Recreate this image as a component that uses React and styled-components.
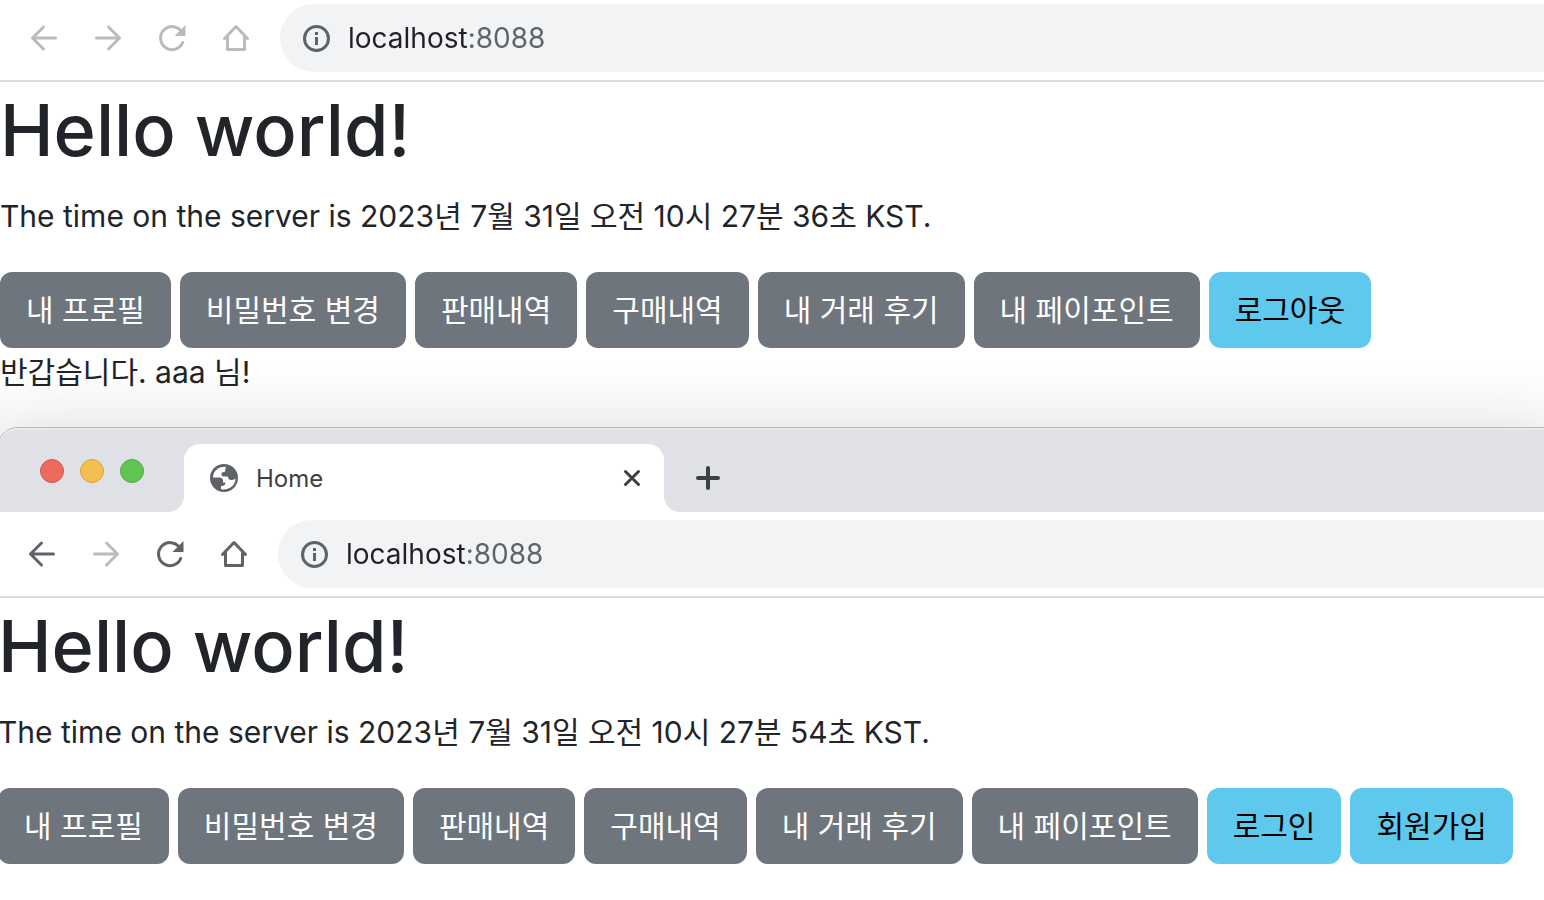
import React from 'react';
import styled, { createGlobalStyle, css } from 'styled-components';

const GlobalStyle = createGlobalStyle`
  * {
    box-sizing: border-box;
  }
  body {
    margin: 0;
    background: #fff;
    color: #212529;
    font-family: Inter, "Noto Sans CJK KR", sans-serif;
  }
  button {
    font-family: inherit;
    border: 0;
    cursor: pointer;
  }
`;

const menus = ['내 프로필', '비밀번호 변경', '판매내역', '구매내역', '내 거래 후기', '내 페이포인트'];

const BackIcon = () => (
  <Icon viewBox="0 0 32 32">
    <path d="M27.5 16H4.5M15.5 5l-11 11 11 11" />
  </Icon>
);

const ForwardIcon = () => (
  <Icon viewBox="0 0 32 32">
    <path d="M4.500 16h23M16.500 5l11 11-11 11" />
  </Icon>
);

const ReloadIcon = () => (
  <Icon viewBox="0 0 32 32">
    <path d="M26.700 20.500A11.500 11.500 0 1 1 25.500 9.500" />
    <path d="M29.500 3v11h-11z" fill="currentColor" stroke="none" />
  </Icon>
);

const HomeIcon = () => (
  <Icon viewBox="0 0 32 32">
    <path d="M4.500 16.500 16 4.500l11.500 12M7.500 15v12.500h17V15" />
  </Icon>
);

const InfoIcon = () => (
  <Icon viewBox="0 0 32 32">
    <circle cx="16.500" cy="16.500" r="12" />
    <path d="M16.500 15v8M16.500 10v3" strokeLinecap="butt" />
  </Icon>
);

const GlobeIcon = () => (
  <Icon viewBox="0 0 32 32">
    <circle cx="16" cy="16" r="14" fill="currentColor" stroke="none" />
    <path
      d="M18 4.700C10.500 4 5 9 5 15.500h6.500c2.500 0 3.500 1.500 3.500 3.500v1.500h2.500c0 2.500-1.500 3.500-4.500 3.500v3.200c8 1.500 14.500-3.700 14.500-10.700-1.500 1.200-3 1.500-4.500 1.500-2 0-3-1.500-3-3.500h-4.500c-1.200 0-2-1-2-2.300s1-2.200 2.500-2.200c2 0 1-3.300 2-5.300z"
      fill="#fff"
      stroke="none"
    />
  </Icon>
);

const CloseIcon = () => (
  <Icon viewBox="0 0 32 32">
    <path d="m9.500 9.500 13 13M22.500 9.500l-13 13" />
  </Icon>
);

const PlusIcon = () => (
  <Icon viewBox="0 0 32 32">
    <path d="M16 6v20M6 16h20" strokeWidth="4" />
  </Icon>
);

const Navigation = ({ name, inactive, first }) => (
  <Toolbar $first={first}>
    <NavButton aria-label="Back" $dim={inactive}><BackIcon /></NavButton>
    <NavButton aria-label="Forward" $dim><ForwardIcon /></NavButton>
    <NavButton aria-label="Reload" $dim={inactive}><ReloadIcon /></NavButton>
    <NavButton aria-label="Home" $dim={inactive}><HomeIcon /></NavButton>
    <AddressBar htmlFor={name} aria-label="Address">
      <InfoIcon />
      <AddressInput id={name} type="text" defaultValue="localhost:8088" />
    </AddressBar>
  </Toolbar>
);

const Home = ({ serverTime, actions, user }) => (
  <Page>
    <Title>Hello world!</Title>
    <Text>The time on the server is {serverTime}.</Text>
    <ButtonRow>
      {menus.map((label) => (
        <MenuButton key={label}>{label}</MenuButton>
      ))}
      {actions.map((label) => (
        <MenuButton key={label} $info>{label}</MenuButton>
      ))}
    </ButtonRow>
    {user && <Greeting>반갑습니다. {user} 님!</Greeting>}
  </Page>
);

const App = () => {
  return (
    <>
      <GlobalStyle />
      <BackWindow>
        <Navigation name="back-address" inactive first />
        <Home serverTime="2023년 7월 31일 오전 10시 27분 36초 KST" actions={['로그아웃']} user="aaa" />
      </BackWindow>
      <FrontWindow>
        <TabStrip>
          <Lights>
            <Light $color="#ed6a5e" $edge="#d4544a" />
            <Light $color="#f5bf4f" $edge="#d6a243" />
            <Light $color="#61c554" $edge="#51a73e" />
          </Lights>
          <Tab>
            <GlobeIcon />
            <TabTitle>Home</TabTitle>
            <TabButton aria-label="Close tab"><CloseIcon /></TabButton>
          </Tab>
          <NewTab>
            <TabButton aria-label="New tab"><PlusIcon /></TabButton>
          </NewTab>
        </TabStrip>
        <Navigation name="front-address" />
        <Home serverTime="2023년 7월 31일 오전 10시 27분 54초 KST" actions={['로그인', '회원가입']} />
      </FrontWindow>
    </>
  );
};

const Icon = styled.svg`
  display: block;
  flex: none;
  width: 32px;
  height: 32px;
  fill: none;
  stroke: currentColor;
  stroke-width: 3;
  stroke-linecap: round;
  stroke-linejoin: round;
`;

const BackWindow = styled.section`
  padding-bottom: 32px;
`;

const FrontWindow = styled.section`
  position: relative;
  margin-left: -2px;
  background: #fff;
  border-radius: 20px 0 0 0;
  box-shadow: 0 0 0 1px #b8b8b8, 0 24px 72px 24px rgba(0, 0, 0, 0.15);
`;

const Toolbar = styled.nav`
  display: flex;
  align-items: center;
  gap: 32px;
  padding: ${({ $first }) => ($first ? '4px 0 8px 28px' : '8px 0 8px 28px')};
  border-bottom: 2px solid #dcdcdd;
`;

const NavButton = styled.button`
  flex: none;
  padding: 0;
  background: none;
  color: ${({ $dim }) => ($dim ? '#babbbd' : '#5f6368')};
`;

const AddressBar = styled.label`
  display: flex;
  flex: 1;
  align-items: center;
  gap: 16px;
  height: 68px;
  margin-left: -4px;
  padding-left: 20px;
  background: #f1f3f4;
  border-radius: 34px 0 0 34px;
  color: #5f6368;
`;

/* host is dark, port is muted */
const AddressInput = styled.input`
  flex: 1;
  min-width: 0;
  padding: 0;
  border: 0;
  outline: 0;
  background: linear-gradient(90deg, #202124 120px, #5f6368 120px);
  background-clip: text;
  color: transparent;
  font-family: inherit;
  font-size: 28px;
  line-height: 40px;
`;

const TabStrip = styled.header`
  display: flex;
  align-items: flex-end;
  height: 84px;
  background: #dfe1e6;
  border-top: 2px solid #e9eaee;
  border-radius: 20px 0 0 0;
`;

const stripPiece = css`
  background: #dfe1e6;
`;

const Lights = styled.div`
  ${stripPiece}
  display: flex;
  gap: 16px;
  width: 186px;
  height: 68px;
  padding: 15px 0 0 42px;
  border-radius: 0 0 16px 0;
  box-shadow: 16px 16px 0 #fff;
  clip-path: inset(0);
`;

const Light = styled.span`
  width: 24px;
  height: 24px;
  border: 1px solid ${({ $edge }) => $edge};
  border-radius: 50%;
  background: ${({ $color }) => $color};
`;

const Tab = styled.div`
  display: flex;
  align-items: center;
  gap: 16px;
  width: 480px;
  height: 68px;
  padding: 0 16px 0 24px;
  background: #fff;
  border-radius: 16px 16px 0 0;
  color: #5f6368;
`;

const TabTitle = styled.span`
  flex: 1;
  color: #3c4043;
  font-size: 24px;
`;

const TabButton = styled.button`
  padding: 0;
  background: none;
  color: #3c4043;
`;

const NewTab = styled.div`
  ${stripPiece}
  display: flex;
  flex: 1;
  align-items: center;
  height: 68px;
  padding-left: 28px;
  border-radius: 0 0 0 16px;
  box-shadow: -16px 16px 0 #fff;
  clip-path: inset(0);
`;

const Page = styled.main`
  font-size: 30px;
  line-height: 48px;
`;

const Title = styled.h1`
  margin: 0 0 14px;
  font-size: 72px;
  font-weight: 500;
  line-height: 96px;
`;

const Text = styled.p`
  margin: 0 0 32px;
`;

const Greeting = styled.p`
  margin: 0;
`;

const ButtonRow = styled.div`
  display: flex;
  flex-wrap: wrap;
  gap: 9px;
`;

const MenuButton = styled.button`
  padding: 14px 26px;
  border-radius: 12px;
  background: ${({ $info }) => ($info ? '#5fc8ed' : '#6e757d')};
  color: ${({ $info }) => ($info ? '#000' : '#fff')};
  font-size: 30px;
  line-height: 48px;
`;

export default App;
